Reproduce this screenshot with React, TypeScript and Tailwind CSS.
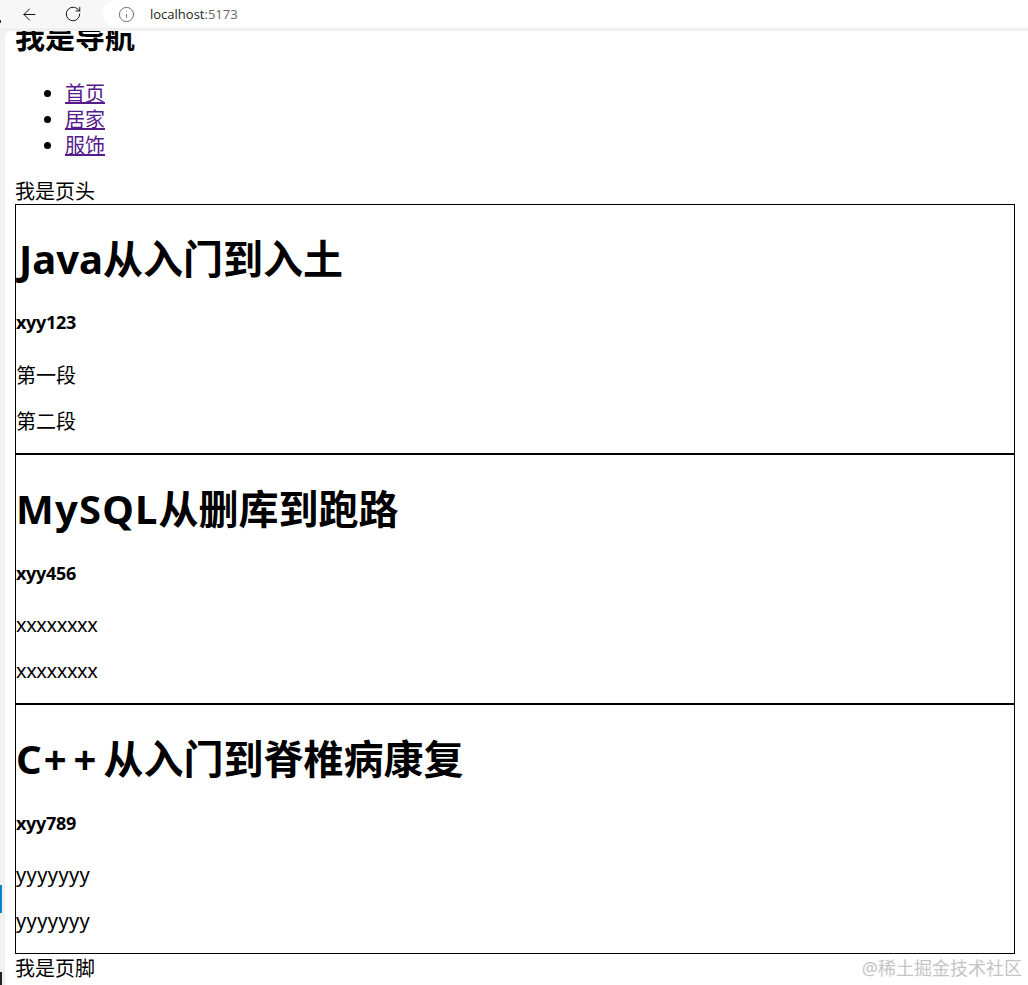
import { ArrowLeft, Info, RotateCw } from 'lucide-react'

const NAV_ITEMS = ['首页', '居家', '服饰']

const ARTICLES = [
  {
    title: <><span className="ml-[3px]">Java</span>从入门到入土</>,
    author: 'xyy123',
    paragraphs: ['第一段', '第二段'],
    authorClass: 'mt-[20px]',
    textClass: 'mt-[28px]',
  },
  {
    title: <><span className="tracking-[1.2px]">MySQL</span>从删库到跑路</>,
    author: 'xyy456',
    paragraphs: ['xxxxxxxx', 'xxxxxxxx'],
    authorClass: 'mt-[21px]',
    textClass: 'mt-[26px] tracking-[-0.4px]',
  },
  {
    title: <><span className="tracking-[2px]">C</span><span className="tracking-[7px]">++</span>从入门到脊椎病康复</>,
    author: 'xyy789',
    paragraphs: ['yyyyyyy', 'yyyyyyy'],
    authorClass: 'mt-[21px]',
    textClass: 'mt-[26px] tracking-[0.4px]',
  },
]

const FONT = "font-['Noto_Sans','Noto_Sans_CJK_SC',sans-serif]"

export default function App() {
  return (
    <div className={`relative flex h-[985px] w-[1028px] flex-col overflow-hidden bg-[#f1f1f1] text-[20px] leading-[26px] text-black ${FONT}`}>
      {/* browser bar */}
      <div className="relative z-10 flex h-[31px] shrink-0 border-b-[3px] border-[#f0f0f0] bg-[#f7f7f7]">
        <div className="flex w-[103px] shrink-0 items-center pl-[20px]">
          <ArrowLeft size={19} strokeWidth={1.2} />
          <RotateCw size={18} strokeWidth={1.2} className="ml-[25px]" />
        </div>
        <div className="flex flex-1 items-center rounded-l-[14px] bg-white pl-[15px]">
          <Info size={17} strokeWidth={1.2} className="text-[#555]" />
          <span className="ml-[15px] font-['Open_Sans',sans-serif] text-[13px] text-[#222]">
            localhost<span className="text-[#666]">:5173</span>
          </span>
        </div>
        <div className="absolute top-[20px] left-0 h-[3px] w-px bg-[#333]" />
      </div>

      <div className="flex min-h-0 flex-1">
        <div className="flex w-[5px] shrink-0 flex-col">
          <div className="mt-[854px] h-[28px] w-[2px] bg-[#0a84c6]" />
          <div className="mt-[59px] h-[13px] w-[2px] bg-[#222]" />
        </div>
        <div className="min-w-0 flex-1 rounded-tl-[6px] bg-white pl-[10px]">
          <h2 className="-mt-[14px] text-[30px] leading-[40px] font-bold">我是导航</h2>
          <ul className="mt-[24px] list-disc pl-[50px]">
            {NAV_ITEMS.map((item) => (
              <li key={item}>
                <a href="#" className="text-[#551a8b] underline">{item}</a>
              </li>
            ))}
          </ul>
          <p className="mt-[20px] h-[25px]">我是页头</p>
          {ARTICLES.map((article) => (
            <div key={article.author} className="h-[250px] w-[1000px] border border-black">
              <h1 className="mt-[24px] text-[40px] leading-[60px] font-bold">{article.title}</h1>
              <h4 className={`${article.authorClass} text-[18px] leading-[26px] font-bold tracking-[-0.3px]`}>{article.author}</h4>
              <p className={article.textClass}>{article.paragraphs[0]}</p>
              <p className={`${article.textClass} !mt-[20px]`}>{article.paragraphs[1]}</p>
            </div>
          ))}
          <p className="mt-[2px]">我是页脚</p>
        </div>
      </div>

      <span className="absolute right-[6px] bottom-[5px] text-[18px] leading-[24px] text-[#c4c4c4]">@稀土掘金技术社区</span>
    </div>
  )
}
